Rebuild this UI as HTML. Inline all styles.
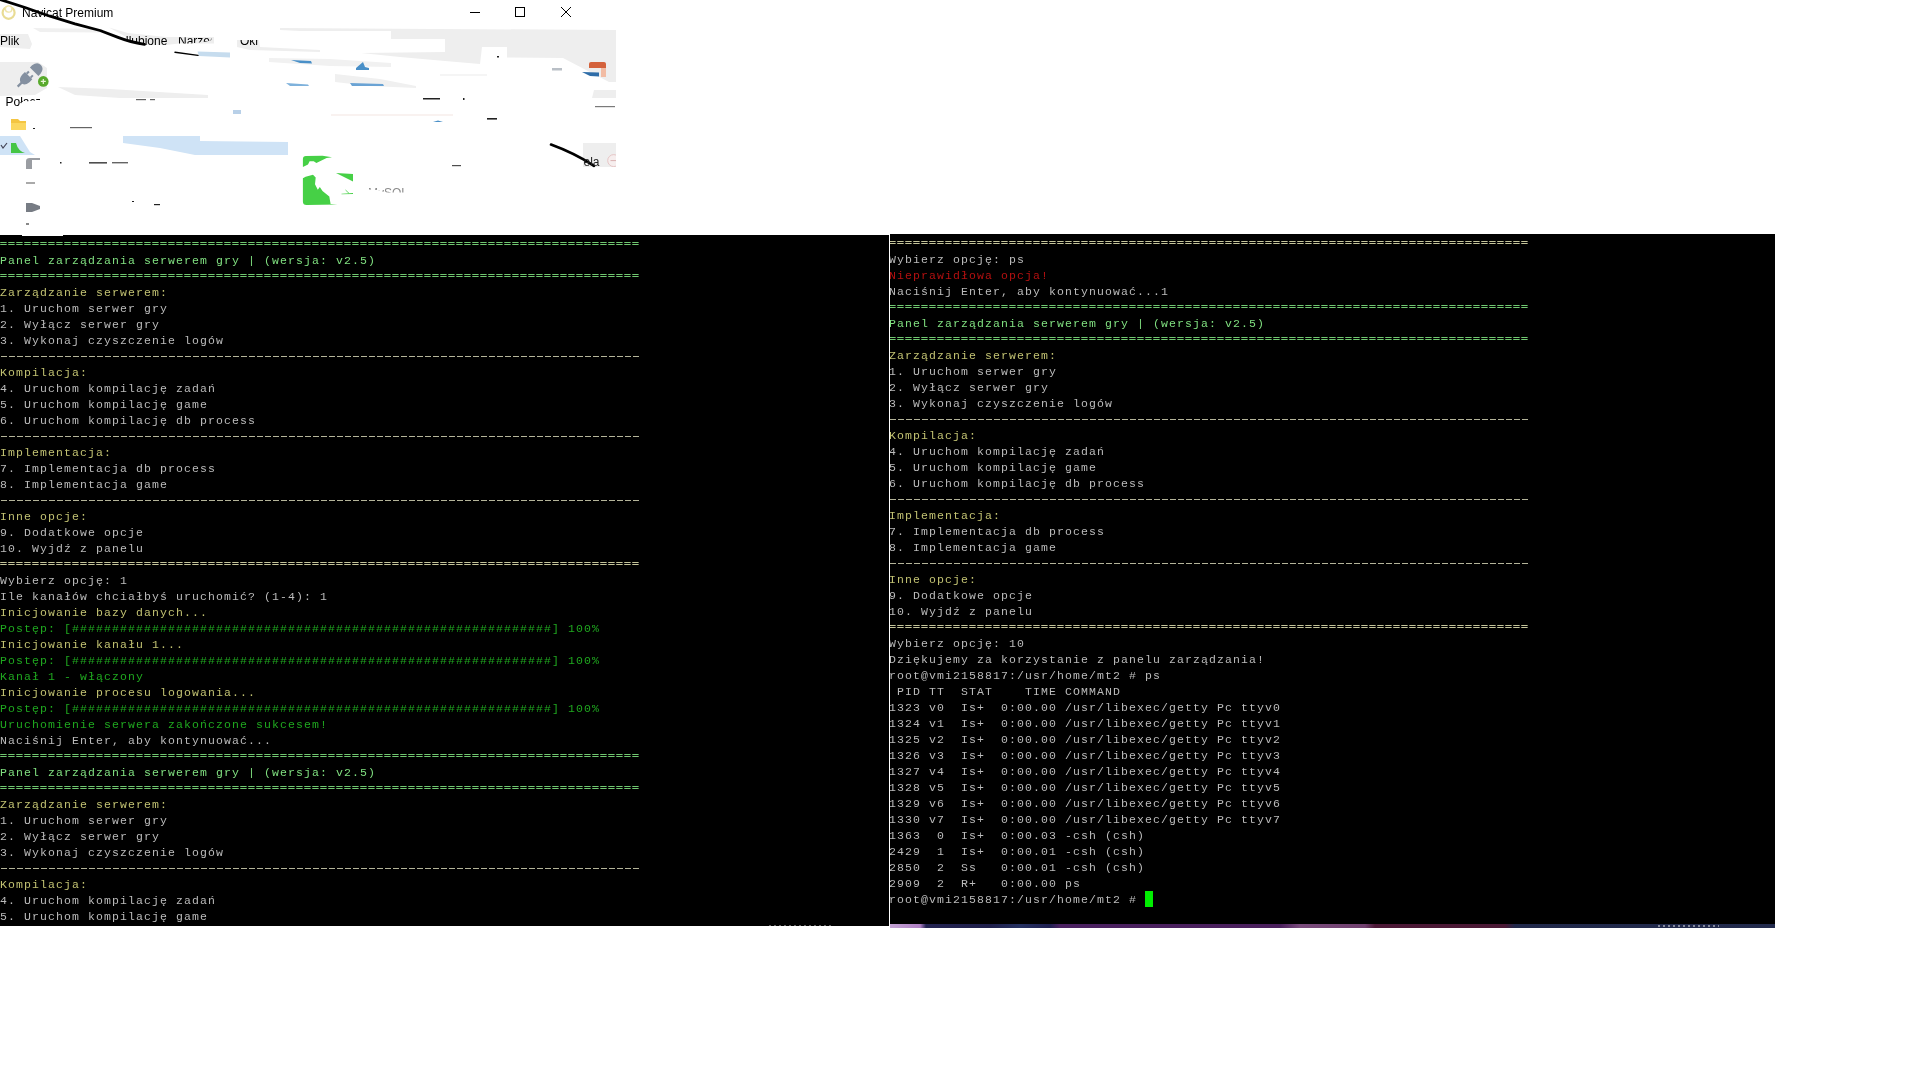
<!DOCTYPE html>
<html lang="pl"><head><meta charset="utf-8"><title>Navicat Premium</title>
<style>
html,body{margin:0;padding:0;background:#fff;}
body{width:1920px;height:1080px;position:relative;overflow:hidden;font-family:"Liberation Sans",sans-serif;}
.term{position:absolute;background:#000;overflow:hidden;font-family:"Liberation Mono","DejaVu Sans Mono",monospace;font-size:11.5px;letter-spacing:1.1px;line-height:16px;color:#bbb;}
.term .in div{height:16px;white-space:pre;}
#tl{left:0;top:235px;width:889px;height:691px;}
#tl .in{position:absolute;left:0;top:2px;transform:translateZ(0);}
#tr{left:890px;top:234px;width:885px;height:694px;}
#tr .in{position:absolute;left:-1px;top:2px;transform:translateZ(0);}
.G{color:#80e080;}
.g{color:#1fa81f;}
.y{color:#c2c272;}
.Y{color:#cccc88;}
.d{color:#b4b49a;position:relative;top:-1px;background:repeating-linear-gradient(90deg,transparent 0,transparent 1px,#b4b49a 1px,#b4b49a 7px,transparent 7px,transparent 8px) 0 8px/640px 1px no-repeat;}
.w{color:#bbbbbb;}
.r{color:#b41010;}
.cur{display:inline-block;width:8px;height:16px;background:#00ee00;vertical-align:top;margin-top:-1px;}
.e{transform:translateY(-2px) scaleY(0.72);transform-origin:0 9.5px;}
.Y.e{color:#f4f4c0;-webkit-text-stroke:0.35px #f4f4c0;}
.G.e{color:#90ff90;-webkit-text-stroke:0.35px #90ff90;}
#vline{position:absolute;left:889px;top:235px;width:1px;height:692px;background:#fff;}
#strip{position:absolute;left:890px;top:924px;width:885px;height:3.5px;background:linear-gradient(90deg,#c4a4d4 0,#b080c4 30px,#222250 36px,#1e1e4a 100px,#243060 130px,#1e1e50 160px,#4a2060 170px,#4a1f5c 390px,#7a4c7c 410px,#70406e 475px,#4c1836 485px,#4a1834 615px,#20284a 625px,#222a4c 100%);}
#nav{position:absolute;left:0;top:0;width:640px;height:236px;transform:translateZ(0);}
#nav text{font-family:"Liberation Sans",sans-serif;font-size:12px;fill:#000;}

</style></head><body>

<svg id="nav" width="640" height="236" viewBox="0 0 640 236">
<defs>
<clipPath id="cUl"><polygon points="126,34 170,34 170,50 150,50 138,44 130,41 126,38"/></clipPath>
<clipPath id="cNa"><polygon points="176,37.3 212,37.3 211,40.5 203,42 190,43.4 176,43.6"/></clipPath>
<clipPath id="cOk"><polygon points="238,40 259,40 259,47 238,47"/></clipPath>
<clipPath id="cPo"><polygon points="0,90 40,90 40,100 30,101 22,102 18,108 0,108"/></clipPath>
<clipPath id="cEla"><rect x="583" y="143" width="33" height="24"/></clipPath>
<filter id="b1"><feGaussianBlur stdDeviation="0.8"/></filter>
</defs>
<!-- grey chrome remnants -->
<g fill="#eeeeee">
<polygon points="0,34 28,34 32,44 30,49 0,47"/>
<polygon points="33,28 103,29 100,32.5 40,32" fill="#f0f0f0"/>
<polygon points="109,27.5 128,33 166,37 179,37 214,37 214,43.4 179,43.4 166,45 146,45 128,38"/>
<polygon points="237,40 259,40 260,47 320,50 320,52 250,50 237,47"/>
<polygon points="0,62 38,62 47,68 47,88 35,95 0,96"/>
<polygon points="58,87 110,89 208,95 208,98 120,98 75,95"/>
<!-- right block -->
<polygon points="280,28 616,30 616,82 609,82 563,58 507,57.5 507,47 482,47 480,64 445,61 400,57 361,53 445,52 445,39 391,39 391,31 300,31 280,30"/>
<polygon points="269,58 330,59 391,63 391,67 330,66 269,62" fill="#f1f1f1"/>
<polygon points="335,74 380,79 416,86 416,88 370,86 335,82" fill="#f0f0f0"/>
<polygon points="594,90 616,90 616,98 592,98"/>
<rect x="440" y="74.5" width="47" height="1" fill="#ececec"/>
<rect x="331" y="114.5" width="122" height="1" fill="#f3e6e2"/>
<rect x="583" y="143" width="33" height="24"/>
</g>
<!-- light blue bits -->
<g fill="#cfe3f6">
<polygon points="123,136 200,136 200,141 288,142 288,155 195,155 160,148 123,143"/>
<polygon points="0,136 20,136 30,152 35,155 0,155"/>
<polygon points="197.5,51.5 230,52.5 230,57.5 199,56" fill="#c6dcee"/>
</g>
<g fill="#4a90c8">
<polygon points="291,60 311,61 312,63.5 300,63"/>
<polygon points="356,68 363,62 365,67 369,68 369,70 356,70"/>
<polygon points="286,83 308,84.5 309,86 290,86" fill="#7fb2dc"/>
<polygon points="350,83 383,84 384,86 352,86" fill="#6aa3d4"/>
<polygon points="433,122 438,120.5 443,122"/>
<rect x="233" y="110" width="8" height="4" fill="#b8d0e8"/>
</g>
<!-- orange/blue icon top right -->
<path d="M589,68 v-4 q0,-2 2,-2 h13 q2,0 2,2 v4 z" fill="#d4623c"/>
<rect x="601" y="68" width="5" height="9" fill="#f2bca4"/>
<polygon points="582,72 599,72.5 599,76.5 590,76" fill="#2f6da8"/>
<rect x="552" y="68" width="10" height="2.5" fill="#b9bfc6"/>
<!-- title -->
<circle cx="8.6" cy="12.8" r="6" fill="#fff" stroke="#e9dc94" stroke-width="2.2"/>
<circle cx="8.6" cy="9" r="3.2" fill="#fff" stroke="#efe4a8" stroke-width="1.3"/>
<text x="22" y="17">Navicat Premium</text>
<!-- window buttons -->
<g stroke="#000" stroke-width="1" fill="none">
<line x1="470" y1="12.5" x2="480" y2="12.5"/>
<rect x="515.5" y="7.5" width="9" height="9"/>
<path d="M561,7 L571,17 M571,7 L561,17"/>
</g>
<!-- menu text fragments -->
<text x="0" y="45">Plik</text>
<g clip-path="url(#cUl)"><text x="120" y="45">Ulubione</text></g>
<g clip-path="url(#cNa)"><text x="178" y="45">Narzędzia</text></g>
<g clip-path="url(#cOk)"><text x="240" y="45">Okno</text></g>
<g clip-path="url(#cPo)"><text x="5.5" y="105.5">Połączenie</text></g>
<!-- plug icon -->
<g fill="#8490a0">
<g transform="translate(26.5,77.8) rotate(-45)">
<path d="M3,-5.2 V5.2 H-1 Q-7.5,4.5 -7.5,0 Q-7.5,-4.5 -1,-5.2 Z"/>
<rect x="-12.5" y="-1.1" width="6" height="2.2"/>
<rect x="3" y="-3.8" width="3.2" height="2"/>
<rect x="3" y="1.8" width="3.2" height="2"/>
</g>
<g transform="translate(36.3,69.6) rotate(-45)">
<path d="M-3,-6 V6 H0 Q6.5,5 6.5,0 Q6.5,-5 0,-6 Z"/>
</g>
</g>
<circle cx="43.3" cy="81.4" r="5.3" fill="#58aa2c"/>
<path d="M40.8,81.4 h5 M43.3,78.9 v5" stroke="#eaf6d8" stroke-width="1.2"/>
<!-- folder icon -->
<path d="M11,119 h7 l2,2 h6 v9 h-15 z" fill="#f4c542"/>
<rect x="11" y="123" width="15" height="7" fill="#fbd760"/>
<!-- small green -->
<path d="M11,143 h5 q2,8 9,10 h-14 z" fill="#45c545"/>
<path d="M1,145 l2,3 l4,-5" stroke="#445" stroke-width="1.2" fill="none"/>
<!-- grey icons -->
<path d="M26,169 v-8 q0,-3 4,-3 h10 v2 h-8 v9 z" fill="#9a9da2"/>
<rect x="26" y="182" width="9" height="2" fill="#aaa"/>
<path d="M26,203 h6 l8,3 v3 l-8,3 h-6 z" fill="#777c84"/>
<rect x="26" y="223" width="3" height="2" fill="#888"/>
<!-- scribble text remnants -->
<g fill="#222">
<rect x="33" y="128" width="2" height="1"/><rect x="70" y="127" width="22" height="1.2" opacity=".7"/>
<rect x="60" y="162" width="1.5" height="1.5"/><rect x="89" y="162" width="18" height="1.6" opacity=".8"/><rect x="112" y="162" width="16" height="1.4" opacity=".7"/>
<rect x="132" y="201" width="2" height="1"/><rect x="154" y="204" width="6" height="1.2"/>
<rect x="136" y="99" width="10" height="1.2" opacity=".7"/><rect x="150" y="99" width="5" height="1.2" opacity=".7"/>
<rect x="423" y="98" width="17" height="1.5"/><rect x="463" y="98" width="1.5" height="2"/>
<rect x="487" y="118" width="10" height="1.6"/>
<rect x="497" y="56" width="2" height="1.5"/>
<rect x="595" y="106" width="20" height="1.2" opacity=".6"/>
<rect x="452" y="165" width="9" height="1.2" opacity=".8"/>
</g>
<!-- black strokes -->
<g stroke="#000" fill="none" stroke-linecap="round">
<path d="M0,-0.5 L25,7.5 L50,16.2 L75,23.8 L100,30.5 L118.7,37.6 Q130,42 144.5,44.3" stroke-width="2.8" stroke-linejoin="round"/>
<path d="M175,52.3 L198,55.4" stroke-width="1.4"/>
<path d="M551,144.6 Q574,153 594,165.8" stroke-width="2.7"/>
</g>
<!-- right small box content -->
<g clip-path="url(#cEla)"><text x="583.5" y="165.6" style="font-size:12px;fill:#222">ela</text>
<circle cx="613.7" cy="160.6" r="6" fill="#f6eeee" stroke="#e6c6c6" stroke-width="1"/><line x1="610.5" y1="160.6" x2="616" y2="160.6" stroke="#d9b0b0"/></g>
<!-- big green icon -->
<g fill="#46d046">
<path d="M302.9,167 V159 Q302.9,156 306,156 L322.5,155.8 L332,157.2 L326.6,157.9 L316.4,163 L313.7,161.2 L309.6,161.2 L308,164.6 Z"/>
<path d="M302.9,178.2 L305.6,176.8 L313,174.8 L315.7,177.5 L315,184.3 L317.8,189.7 L319.8,187 L322.5,191 L329.3,196.5 L330.6,203.9 L337.4,204.6 L306.5,205 Q302.9,205 302.9,201.5 Z"/>
<polygon points="336,173.1 353,174.1 353,181.6"/>
<polygon points="341.5,193.8 353,193 353,194 341.5,194.2"/>
<path d="M345.5,190 L349,193.3" stroke="#46d046" stroke-width="0.8"/>
</g>
<defs><clipPath id="cMy"><polygon points="369,184 408,184 408,192.4 385,192.4 378,190 369,189.5"/></clipPath></defs>
<g clip-path="url(#cMy)"><text x="368" y="197" style="font-size:12px;fill:#8a8a8a">MySQL</text></g>
</svg>

<div class="term" id="tl"><div class="in">
<div class="G e">================================================================================</div>
<div class="G">Panel zarządzania serwerem gry | (wersja: v2.5)</div>
<div class="G e">================================================================================</div>
<div class="y">Zarządzanie serwerem:</div>
<div class="w">1. Uruchom serwer gry</div>
<div class="w">2. Wyłącz serwer gry</div>
<div class="w">3. Wykonaj czyszczenie logów</div>
<div class="d">--------------------------------------------------------------------------------</div>
<div class="y">Kompilacja:</div>
<div class="w">4. Uruchom kompilację zadań</div>
<div class="w">5. Uruchom kompilację game</div>
<div class="w">6. Uruchom kompilację db process</div>
<div class="d">--------------------------------------------------------------------------------</div>
<div class="y">Implementacja:</div>
<div class="w">7. Implementacja db process</div>
<div class="w">8. Implementacja game</div>
<div class="d">--------------------------------------------------------------------------------</div>
<div class="y">Inne opcje:</div>
<div class="w">9. Dodatkowe opcje</div>
<div class="w">10. Wyjdź z panelu</div>
<div class="Y e">================================================================================</div>
<div class="w">Wybierz opcję: 1</div>
<div class="w">Ile kanałów chciałbyś uruchomić? (1-4): 1</div>
<div class="y">Inicjowanie bazy danych...</div>
<div class="g">Postęp: [############################################################] 100%</div>
<div class="y">Inicjowanie kanału 1...</div>
<div class="g">Postęp: [############################################################] 100%</div>
<div class="g">Kanał 1 - włączony</div>
<div class="y">Inicjowanie procesu logowania...</div>
<div class="g">Postęp: [############################################################] 100%</div>
<div class="g">Uruchomienie serwera zakończone sukcesem!</div>
<div class="w">Naciśnij Enter, aby kontynuować...</div>
<div class="G e">================================================================================</div>
<div class="G">Panel zarządzania serwerem gry | (wersja: v2.5)</div>
<div class="G e">================================================================================</div>
<div class="y">Zarządzanie serwerem:</div>
<div class="w">1. Uruchom serwer gry</div>
<div class="w">2. Wyłącz serwer gry</div>
<div class="w">3. Wykonaj czyszczenie logów</div>
<div class="d">--------------------------------------------------------------------------------</div>
<div class="y">Kompilacja:</div>
<div class="w">4. Uruchom kompilację zadań</div>
<div class="w">5. Uruchom kompilację game</div>
</div></div>
<div class="term" id="tr"><div class="in">
<div class="Y e">================================================================================</div>
<div class="w">Wybierz opcję: ps</div>
<div class="r">Nieprawidłowa opcja!</div>
<div class="w">Naciśnij Enter, aby kontynuować...1</div>
<div class="G e">================================================================================</div>
<div class="G">Panel zarządzania serwerem gry | (wersja: v2.5)</div>
<div class="G e">================================================================================</div>
<div class="y">Zarządzanie serwerem:</div>
<div class="w">1. Uruchom serwer gry</div>
<div class="w">2. Wyłącz serwer gry</div>
<div class="w">3. Wykonaj czyszczenie logów</div>
<div class="d">--------------------------------------------------------------------------------</div>
<div class="y">Kompilacja:</div>
<div class="w">4. Uruchom kompilację zadań</div>
<div class="w">5. Uruchom kompilację game</div>
<div class="w">6. Uruchom kompilację db process</div>
<div class="d">--------------------------------------------------------------------------------</div>
<div class="y">Implementacja:</div>
<div class="w">7. Implementacja db process</div>
<div class="w">8. Implementacja game</div>
<div class="d">--------------------------------------------------------------------------------</div>
<div class="y">Inne opcje:</div>
<div class="w">9. Dodatkowe opcje</div>
<div class="w">10. Wyjdź z panelu</div>
<div class="Y e">================================================================================</div>
<div class="w">Wybierz opcję: 10</div>
<div class="w">Dziękujemy za korzystanie z panelu zarządzania!</div>
<div class="w">root@vmi2158817:/usr/home/mt2 # ps</div>
<div class="w"> PID TT  STAT    TIME COMMAND</div>
<div class="w">1323 v0  Is+  0:00.00 /usr/libexec/getty Pc ttyv0</div>
<div class="w">1324 v1  Is+  0:00.00 /usr/libexec/getty Pc ttyv1</div>
<div class="w">1325 v2  Is+  0:00.00 /usr/libexec/getty Pc ttyv2</div>
<div class="w">1326 v3  Is+  0:00.00 /usr/libexec/getty Pc ttyv3</div>
<div class="w">1327 v4  Is+  0:00.00 /usr/libexec/getty Pc ttyv4</div>
<div class="w">1328 v5  Is+  0:00.00 /usr/libexec/getty Pc ttyv5</div>
<div class="w">1329 v6  Is+  0:00.00 /usr/libexec/getty Pc ttyv6</div>
<div class="w">1330 v7  Is+  0:00.00 /usr/libexec/getty Pc ttyv7</div>
<div class="w">1363  0  Is+  0:00.03 -csh (csh)</div>
<div class="w">2429  1  Is+  0:00.01 -csh (csh)</div>
<div class="w">2850  2  Ss   0:00.01 -csh (csh)</div>
<div class="w">2909  2  R+   0:00.00 ps</div>
<div class="w">root@vmi2158817:/usr/home/mt2 # <i class="cur"></i></div>
</div></div>
<div id="vline"></div>
<div style="position:absolute;left:22px;top:235px;width:41px;height:1px;background:#fff"></div>
<div id="strip"></div>
<div style="position:absolute;left:769px;top:925px;width:62px;height:1px;background:repeating-linear-gradient(90deg,rgba(255,255,255,.4) 0,rgba(255,255,255,.4) 2px,transparent 2px,transparent 5px)"></div>
<div style="position:absolute;left:1658px;top:925px;width:61px;height:1.5px;background:repeating-linear-gradient(90deg,rgba(255,255,255,.45) 0,rgba(255,255,255,.45) 2px,transparent 2px,transparent 5px)"></div>
</body></html>
